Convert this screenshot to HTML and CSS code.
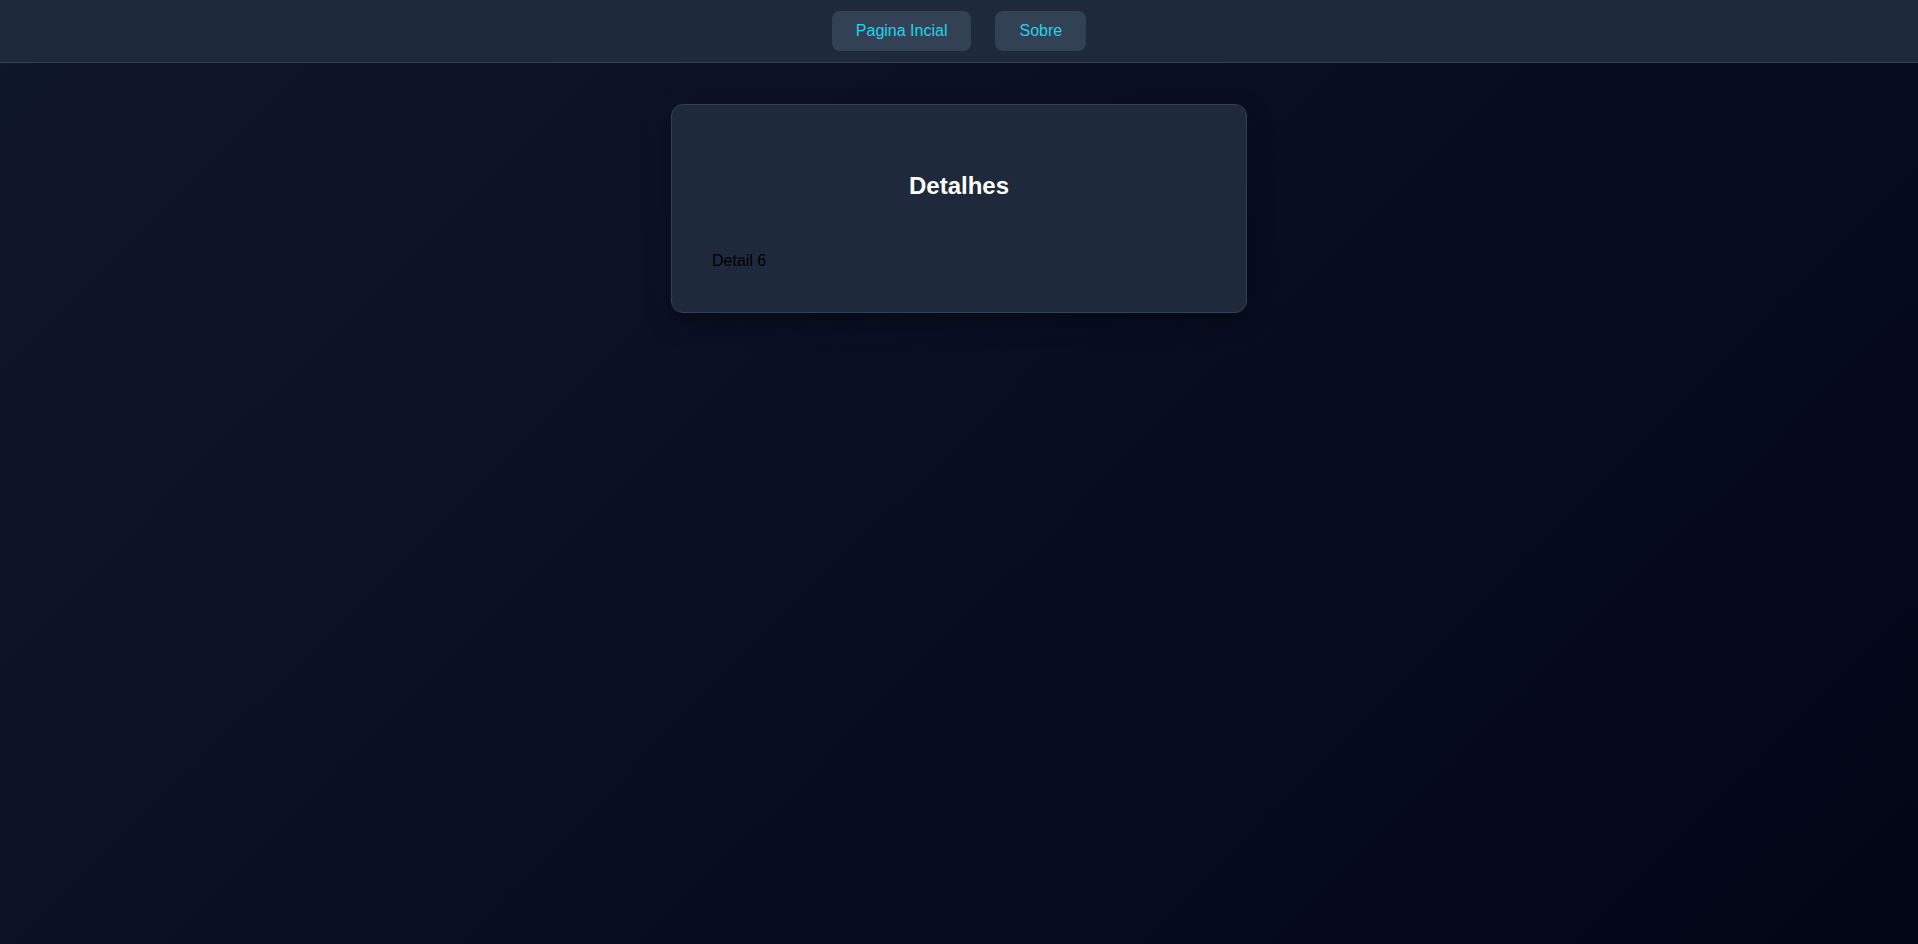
FILE: index.html
```html
<!DOCTYPE html>
<html lang="pt">
<head>
<meta charset="utf-8">
<title>Detalhes</title>
<link rel="stylesheet" href="styles.css">
</head>
<body>
<nav class="navbar">
  <a class="nav-btn" href="#">Pagina Incial</a>
  <a class="nav-btn" href="#">Sobre</a>
</nav>
<main class="main">
  <section class="card">
    <h2 class="card-title">Detalhes</h2>
    <p class="card-text">Detail 6</p>
  </section>
</main>
</body>
</html>
```
FILE: styles.css
```css
html, body {
  margin: 0;
  padding: 0;
}
body {
  min-height: 100vh;
  font-family: "Liberation Sans", Arial, sans-serif;
  background: linear-gradient(135deg, #0f172a 0%, #020617 100%);
  background-attachment: fixed;
}
.navbar {
  display: flex;
  justify-content: center;
  gap: 24px;
  padding: 11px 0;
  background: #1e293b;
  border-bottom: 1px solid #334155;
}
.nav-btn {
  display: block;
  padding: 10px 24px;
  line-height: 20px;
  font-size: 16px;
  color: #22d3ee;
  background: #334155;
  border-radius: 8px;
  text-decoration: none;
}
.main {
  display: flex;
  justify-content: center;
  padding-top: 41px;
}
.card {
  box-sizing: border-box;
  width: 576px;
  padding: 40px 40px 42px;
  background: #1e293b;
  border: 1px solid #334155;
  border-radius: 12px;
  box-shadow: 0 10px 25px rgba(0, 0, 0, 0.35);
}
.card-title {
  margin: 27px 0 52px;
  text-align: center;
  font-size: 24px;
  font-weight: bold;
  color: #ffffff;
}
.card-text {
  margin: 0;
  font-size: 16px;
  color: #000000;
}
```
